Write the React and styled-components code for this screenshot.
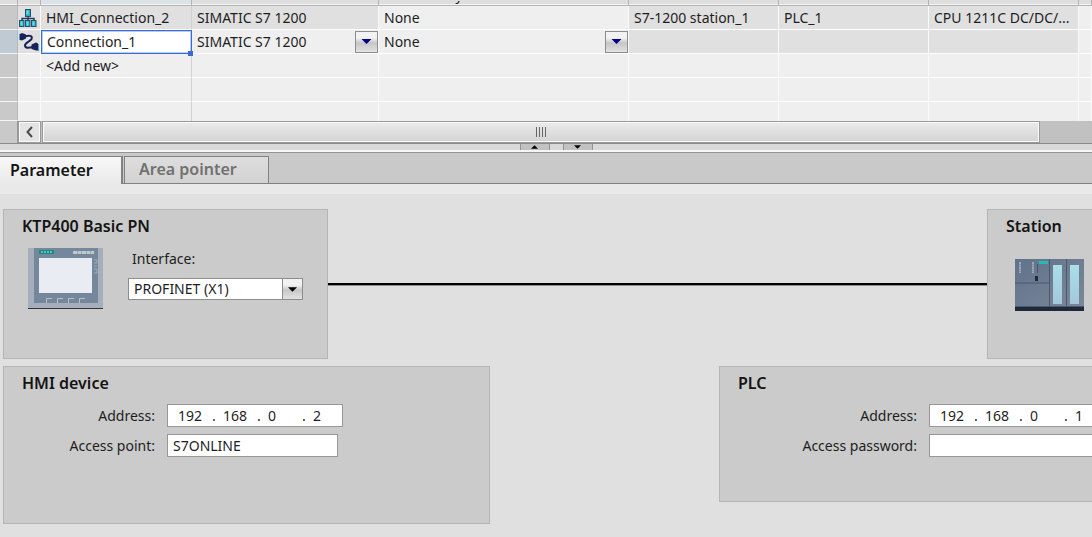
import { useState } from "react";
import styled, { createGlobalStyle } from "styled-components";

const GlobalStyles = createGlobalStyle`
  *,
  *::before,
  *::after {
    box-sizing: border-box;
  }

  body {
    margin: 0;
    background: #e0e0e0;
    color: #1e1e1e;
    font-family: "Noto Sans", "Open Sans", sans-serif;
    font-size: 14px;
    line-height: 20px;
  }

  button,
  input,
  select {
    margin: 0;
    padding: 0;
    border: 0;
    border-radius: 0;
    color: inherit;
    font: inherit;
    outline: none;
  }
`;

const Page = styled.div`
  display: flex;
  flex-direction: column;
  min-height: 100vh;
  overflow: hidden;
`;

/* ---------- connection table ---------- */

const Table = styled.table`
  width: 100%;
  table-layout: fixed;
  border-collapse: separate;
  border-spacing: 0;
`;

const Col = styled.col`
  width: ${(props) => props.$width};
`;

const HeadCell = styled.th`
  height: 6px;
  padding: 0;
  background: ${(props) => (props.$active ? "#dbe2e8" : "#dedede")};
  border-right: 1px solid #b4b4b4;
  border-bottom: 1px solid #b4b4b4;
  box-shadow: inset 0 -1px #f4f4f4;
  font-weight: 400;
  text-align: left;
`;

const HeadClip = styled.div`
  display: flex;
  align-items: flex-end;
  height: 4px;
  padding: 0 5px;
  overflow: hidden;
  white-space: nowrap;
`;

const Row = styled.tr`
  height: ${(props) => (props.$last ? "19px" : "24px")};
`;

const cellColors = {
  plain: "#efefef",
  locked: "#e0e0e0",
  edit: "#ffffff",
};

const Cell = styled.td`
  position: relative;
  padding: 0 0 0 ${(props) => (props.$flush ? "0" : "5px")};
  background: ${(props) => cellColors[props.$tone || "plain"]};
  border-right: 1px solid ${(props) => (props.$shade ? "#d2d2d2" : "#fafafa")};
  border-bottom: ${(props) => (props.$last ? "0" : "1px")} solid #ffffff;
  overflow: hidden;
  text-overflow: ellipsis;
  white-space: nowrap;
`;

const Gutter = styled.td`
  padding: 0;
  background: ${(props) => (props.$active ? "#c0cad3" : "#c9c9c9")};
  border-right: 1px solid #b9b9b9;
  border-bottom: 1px solid #f4f4f4;
`;

const IconCell = styled(Cell)`
  svg {
    display: block;
    margin: 0 1px;
  }
`;

const NameCell = styled(Cell)`
  overflow: visible;
  border: 0;
`;

const NameInput = styled.input`
  display: block;
  width: 100%;
  height: 24px;
  padding: 0 5px 2px;
  background: #fff;
  border: 1px solid #3b6bd0;
  box-shadow: inset 0 0 0 1px #b9cbf2;
`;

const FillHandle = styled.span`
  position: absolute;
  right: -1px;
  bottom: -2px;
  z-index: 1;
  width: 5px;
  height: 5px;
  background: #3b6bd0;
`;

const SelectBox = styled.div`
  display: grid;
  grid-template-columns: 1fr ${(props) => (props.$framed ? "20px" : "23px")};
  align-items: center;
  width: ${(props) => (props.$framed ? "175px" : "100%")};
  height: ${(props) => (props.$framed ? "22px" : "23px")};
  background: ${(props) => (props.$framed ? "#fff" : "transparent")};
  border: ${(props) => (props.$framed ? "1px solid #8d8d8d" : "0")};
`;

const Select = styled.select`
  grid-area: 1 / 1 / 2 / 3;
  width: 100%;
  height: 20px;
  padding-left: 5px;
  appearance: none;
  background: transparent;
`;

const Arrow = styled.span`
  grid-area: 1 / 2 / 2 / 3;
  display: flex;
  align-items: center;
  justify-content: center;
  height: ${(props) => (props.$framed ? "20px" : "22px")};
  background: linear-gradient(#f2f2f2 30%, #c6c6c6 55%, #e2e2e2);
  border: 1px solid #8d8d8d;
  border-width: ${(props) => (props.$framed ? "0 0 0 1px" : "1px")};
  pointer-events: none;
`;

/* ---------- scroll bar and splitter ---------- */

const ScrollRow = styled.div`
  display: grid;
  grid-template-columns: 18px 23px 1fr 52px;
  height: 23px;
  background: #c1c1c1;
  border-bottom: 1px solid #8a8a8a;
`;

const ScrollGutter = styled.div`
  background: #c9c9c9;
  border-right: 1px solid #9a9a9a;
`;

const ScrollButton = styled.button`
  display: flex;
  align-items: center;
  justify-content: center;
  background: #e4e4e4;
  border: 1px solid #9a9a9a;
  box-shadow: inset 0 0 0 1px #fafafa;
`;

const Thumb = styled.div`
  display: flex;
  align-items: center;
  justify-content: center;
  margin-left: 1px;
  background: linear-gradient(#ebebeb, #d3d3d3);
  border: 1px solid #9a9a9a;
  box-shadow: inset 0 0 0 1px #fafafa;
`;

const Splitter = styled.div`
  display: flex;
  justify-content: center;
  gap: 13px;
  height: 9px;
  padding: 0 0 1px 20px;
  background: #d9d9d9;
  border-bottom: 1px solid #949494;
  box-shadow: inset 0 -2px #f6f6f6;
`;

const SplitButton = styled.button`
  display: flex;
  align-items: center;
  justify-content: center;
  width: 30px;
  height: 6px;
  background: #c2c2c2;
  border: 1px solid #949494;
  border-width: 0 1px;
`;

/* ---------- tabs ---------- */

const TabBar = styled.div`
  display: flex;
  height: 31px;
  padding-top: 3px;
  background: #c9c9c9;
  box-shadow: inset 0 -1px #828282;
`;

const Tab = styled.button`
  width: ${(props) => (props.$active ? "123px" : "145px")};
  margin-right: 1px;
  padding: 0 0 2px ${(props) => (props.$active ? "10px" : "14px")};
  background: ${(props) =>
    props.$active
      ? "linear-gradient(#f8f8f8, #e9e9e9)"
      : "linear-gradient(#dedede, #d2d2d2)"};
  border: 1px solid #828282;
  border-width: ${(props) => (props.$active ? "1px 2px 0 0" : "1px")};
  color: ${(props) => (props.$active ? "#141414" : "#717171")};
  font-size: 16px;
  font-weight: 600;
  text-align: left;
`;

const TabPanel = styled.main`
  display: flex;
  flex: 1;
  flex-direction: column;
  gap: 7px;
  padding: 15px 0 13px 3px;
  border-top: 10px solid #e9e9e9;
`;

/* ---------- panels ---------- */

const PanelRow = styled.div`
  display: flex;
  align-items: ${(props) => props.$align};
  justify-content: space-between;
`;

const Panel = styled.section`
  flex: none;
  width: ${(props) => props.$width};
  min-height: ${(props) => props.$height};
  padding-top: 6px;
  background: #cbcbcb;
  border: 1px solid #b5b5b5;
  border-right-width: ${(props) => (props.$open ? "0" : "1px")};
`;

const Title = styled.h2`
  margin: 0 0 11px;
  padding-left: 18px;
  color: #141414;
  font-size: 16px;
  font-weight: 600;
  line-height: 20px;
`;

const Wire = styled.div`
  flex: 1;
  height: 3px;
  background: #000;
  border-bottom: 1px solid #8c8c8c;
`;

const DeviceRow = styled.div`
  display: flex;
  gap: 25px;
  padding-left: 24px;
`;

const Interface = styled.div`
  display: flex;
  flex-direction: column;
  gap: 9px;
`;

const InterfaceLabel = styled.label`
  padding: 2px 0 0 4px;
`;

const StationPicture = styled.div`
  padding: 12px 0 0 27px;
`;

const Form = styled.div`
  display: grid;
  grid-template-columns: ${(props) => props.$labelWidth} 1fr;
  gap: 7px 12px;
  align-items: center;
`;

const Label = styled.label`
  text-align: right;
`;

const TextInput = styled.input`
  width: ${(props) => props.$width};
  height: 23px;
  padding: 0 5px;
  background: #fff;
  border: 1px solid #979797;
  border-right-width: ${(props) => (props.$open ? "0" : "1px")};
`;

const IpBox = styled.div`
  display: flex;
  align-items: center;
  width: ${(props) => props.$width};
  height: 23px;
  padding: 1px 0 0 10px;
  overflow: hidden;
  background: #fff;
  border: 1px solid #979797;
  border-right-width: ${(props) => (props.$open ? "0" : "1px")};
`;

const Octet = styled.input`
  flex: none;
  width: 34px;
  height: 20px;
  background: transparent;
`;

const Dot = styled.span`
  flex: none;
  width: 11px;
`;

/* ---------- drawings ---------- */

function Triangle({ up, color = "#000", width = 9, height = 5 }) {
  return (
    <svg width={width} height={height} viewBox="0 0 10 5">
      <path d={up ? "M0 5L5 0L10 5Z" : "M0 0H10L5 5Z"} fill={color} />
    </svg>
  );
}

function NetworkIcon() {
  return (
    <svg width="18" height="20" viewBox="0 0 18 20">
      <path
        d="M9 7V13M3 14V10.5H15V14"
        fill="none"
        stroke="#26365c"
        strokeWidth="1.5"
      />
      <rect x="6.5" y="1.5" width="5" height="7" fill="#2ba9b8" stroke="#28506e" />
      <rect x="7.5" y="2.5" width="2" height="4" fill="#5ee6ea" />
      {[0.5, 6.5, 12.5].map((x) => (
        <g key={x}>
          <rect x={x} y="12.5" width="4.5" height="6" fill="#2ba9b8" stroke="#28506e" />
          <rect x={x + 1} y="13.5" width="2" height="4" fill="#5ee6ea" />
        </g>
      ))}
    </svg>
  );
}

function CableIcon() {
  return (
    <svg width="20" height="20" viewBox="0 0 20 20">
      <path
        d="M6 4.5C10 3 14 3.5 12.5 7C11 10 6 10 6 13.5C6 16.5 10 16 14 15"
        fill="none"
        stroke="#1b2058"
        strokeWidth="2"
      />
      <path d="M1 2L3 1L7 2.5V6.5L3 8.5L1 8Z" fill="#1b2058" />
      <path d="M19 11.5L17 10.5L12.5 12.5V17L17 18.5H19Z" fill="#1b2058" />
      <path d="M0.5 2V8M19.5 12V19" stroke="#36a3dc" />
    </svg>
  );
}

function PanelPicture() {
  return (
    <svg width="75" height="62" viewBox="0 0 75 62">
      <rect y="1" width="75" height="61" fill="#a5aebb" />
      <rect x="6" y="1" width="64" height="55" fill="#75879a" />
      <rect x="11" y="3" width="15" height="4" fill="#168b87" />
      <path d="M13 5H24" stroke="#bfe3df" strokeDasharray="2 1" />
      <path d="M45 5.500H66" stroke="#c0c8d2" strokeWidth="3" strokeDasharray="4 0.5" />
      <rect x="11" y="11" width="53" height="35" fill="#e9ecf2" />
      <path
        d="M66 13H69V16H66M66 19H69M66 22H69V26H66"
        fill="none"
        stroke="#9dabb8"
      />
      {[18, 29, 40, 51].map((x) => (
        <path
          key={x}
          d={`M${x + 0.5} 56V51.5H${x + 6}`}
          fill="none"
          stroke="#b7c1cb"
        />
      ))}
      <rect y="61" width="75" height="1" fill="#30353d" />
    </svg>
  );
}

function RackPicture() {
  return (
    <svg width="69" height="52" viewBox="0 0 69 52">
      <defs>
        <linearGradient id="rack" x1="0" y1="0" x2="1" y2="1">
          <stop offset="0" stopColor="#60718a" />
          <stop offset="1" stopColor="#7c8999" />
        </linearGradient>
        <linearGradient id="glass" x1="0" y1="0" x2="0" y2="1">
          <stop offset="0" stopColor="#a9dfe9" />
          <stop offset="1" stopColor="#a4c8da" />
        </linearGradient>
      </defs>
      <rect width="69" height="52" fill="url(#rack)" />
      <path d="M0 24H34" stroke="#4c596d" />
      <path d="M34.5 0V48M51.5 0V48" stroke="#4c596d" />
      <path d="M5 3V14M18 3V14" stroke="#9fa9b7" strokeWidth="2" strokeDasharray="2 0.5" />
      <path d="M22.5 5V14" stroke="#475469" />
      <rect x="24" y="2" width="9" height="3" fill="#20bdb8" />
      <rect x="20" y="17" width="3" height="5" fill="#202a3b" />
      <rect x="38" y="6" width="9" height="39" fill="url(#glass)" />
      <rect x="55" y="6" width="9" height="39" fill="url(#glass)" />
      <rect y="47" width="69" height="1" fill="#4c596d" />
      <rect y="48" width="69" height="4" fill="#20293a" />
    </svg>
  );
}

/* ---------- composed parts ---------- */

const columns = ["18px", "23px", "151px", "187px", "250px", "150px", "150px", "150px", "auto"];

function Dropdown({ id, label, options, framed }) {
  return (
    <SelectBox $framed={framed}>
      <Select id={id} aria-label={label}>
        {options.map((option) => (
          <option key={option}>{option}</option>
        ))}
      </Select>
      <Arrow $framed={framed}>
        <Triangle color={framed ? "#000" : "#00008b"} width={framed ? 9 : 11} />
      </Arrow>
    </SelectBox>
  );
}

function EmptyRow({ name, last }) {
  return (
    <Row $last={last}>
      <Gutter />
      <Cell $last={last} />
      <Cell $last={last} $shade>
        {name}
      </Cell>
      {columns.slice(3).map((width, i) => (
        <Cell key={i} $last={last} />
      ))}
    </Row>
  );
}

function ConnectionTable() {
  return (
    <Table>
      <colgroup>
        {columns.map((width, i) => (
          <Col key={i} $width={width} />
        ))}
      </colgroup>
      <thead>
        <tr>
          {columns.map((width, i) => (
            <HeadCell key={i} $active={i === 2}>
              <HeadClip>{i === 4 && "HMI time synchronization mode"}</HeadClip>
            </HeadCell>
          ))}
        </tr>
      </thead>
      <tbody>
        <Row>
          <Gutter />
          <IconCell $tone="locked" $flush>
            <NetworkIcon />
          </IconCell>
          <Cell $tone="locked" $shade>
            HMI_Connection_2
          </Cell>
          <Cell $tone="locked">SIMATIC S7 1200</Cell>
          <Cell>None</Cell>
          <Cell $tone="locked">S7-1200 station_1</Cell>
          <Cell $tone="locked">PLC_1</Cell>
          <Cell $tone="locked">CPU 1211C DC/DC/...</Cell>
          <Cell />
        </Row>
        <Row>
          <Gutter $active />
          <IconCell $tone="locked" $flush>
            <CableIcon />
          </IconCell>
          <NameCell $tone="edit" $flush>
            <NameInput aria-label="Connection name" defaultValue="Connection_1" />
            <FillHandle />
          </NameCell>
          <Cell $flush>
            <Dropdown label="Communication driver" options={["SIMATIC S7 1200"]} />
          </Cell>
          <Cell $flush>
            <Dropdown label="Time synchronization" options={["None"]} />
          </Cell>
          <Cell $tone="locked" />
          <Cell $tone="locked" />
          <Cell $tone="locked" />
          <Cell />
        </Row>
        <EmptyRow name="<Add new>" />
        <EmptyRow />
        <EmptyRow last />
      </tbody>
    </Table>
  );
}

function IpAddress({ id, value, width, open }) {
  return (
    <IpBox $width={width} $open={open}>
      {value.map((octet, i) => [
        i > 0 && <Dot key={`dot${i}`}>.</Dot>,
        <Octet
          key={i}
          id={i === 0 ? id : undefined}
          aria-label={i === 0 ? undefined : `Address part ${i + 1}`}
          defaultValue={octet}
        />,
      ])}
    </IpBox>
  );
}

function App() {
  const [tab, setTab] = useState("Parameter");

  return (
    <>
      <GlobalStyles />
      <Page>
        <ConnectionTable />

        <ScrollRow>
          <ScrollGutter />
          <ScrollButton aria-label="Scroll left">
            <svg width="8" height="12" viewBox="0 0 8 12">
              <path d="M6 1L1.5 6L6 11" fill="none" stroke="#4a4a4a" strokeWidth="2" />
            </svg>
          </ScrollButton>
          <Thumb>
            <svg width="10" height="10" viewBox="0 0 10 10">
              <path d="M0.5 0V10M3.5 0V10M6.5 0V10M9.5 0V10" stroke="#666" />
            </svg>
          </Thumb>
        </ScrollRow>

        <Splitter>
          <SplitButton aria-label="Collapse table">
            <Triangle up width={7} height={4} />
          </SplitButton>
          <SplitButton aria-label="Collapse details">
            <Triangle width={7} height={4} />
          </SplitButton>
        </Splitter>

        <TabBar role="tablist">
          {["Parameter", "Area pointer"].map((name) => (
            <Tab
              key={name}
              role="tab"
              aria-selected={tab === name}
              $active={tab === name}
              onClick={() => setTab(name)}
            >
              {name}
            </Tab>
          ))}
        </TabBar>

        <TabPanel>
          <PanelRow $align="center">
            <Panel $width="325px" $height="150px">
              <Title>KTP400 Basic PN</Title>
              <DeviceRow>
                <PanelPicture />
                <Interface>
                  <InterfaceLabel htmlFor="interface">Interface:</InterfaceLabel>
                  <Dropdown id="interface" options={["PROFINET (X1)"]} framed />
                </Interface>
              </DeviceRow>
            </Panel>
            <Wire />
            <Panel $width="105px" $height="150px" $open>
              <Title>Station</Title>
              <StationPicture>
                <RackPicture />
              </StationPicture>
            </Panel>
          </PanelRow>

          <PanelRow $align="flex-start">
            <Panel $width="487px" $height="158px">
              <Title>HMI device</Title>
              <Form $labelWidth="151px">
                <Label htmlFor="hmi-address">Address:</Label>
                <IpAddress id="hmi-address" value={["192", "168", "0", "2"]} width="176px" />
                <Label htmlFor="access-point">Access point:</Label>
                <TextInput id="access-point" defaultValue="S7ONLINE" $width="171px" />
              </Form>
            </Panel>
            <Panel $width="373px" $height="136px" $open>
              <Title>PLC</Title>
              <Form $labelWidth="197px">
                <Label htmlFor="plc-address">Address:</Label>
                <IpAddress id="plc-address" value={["192", "168", "0", "1"]} width="100%" open />
                <Label htmlFor="access-password">Access password:</Label>
                <TextInput id="access-password" type="password" $width="100%" $open />
              </Form>
            </Panel>
          </PanelRow>
        </TabPanel>
      </Page>
    </>
  );
}

export default App;
